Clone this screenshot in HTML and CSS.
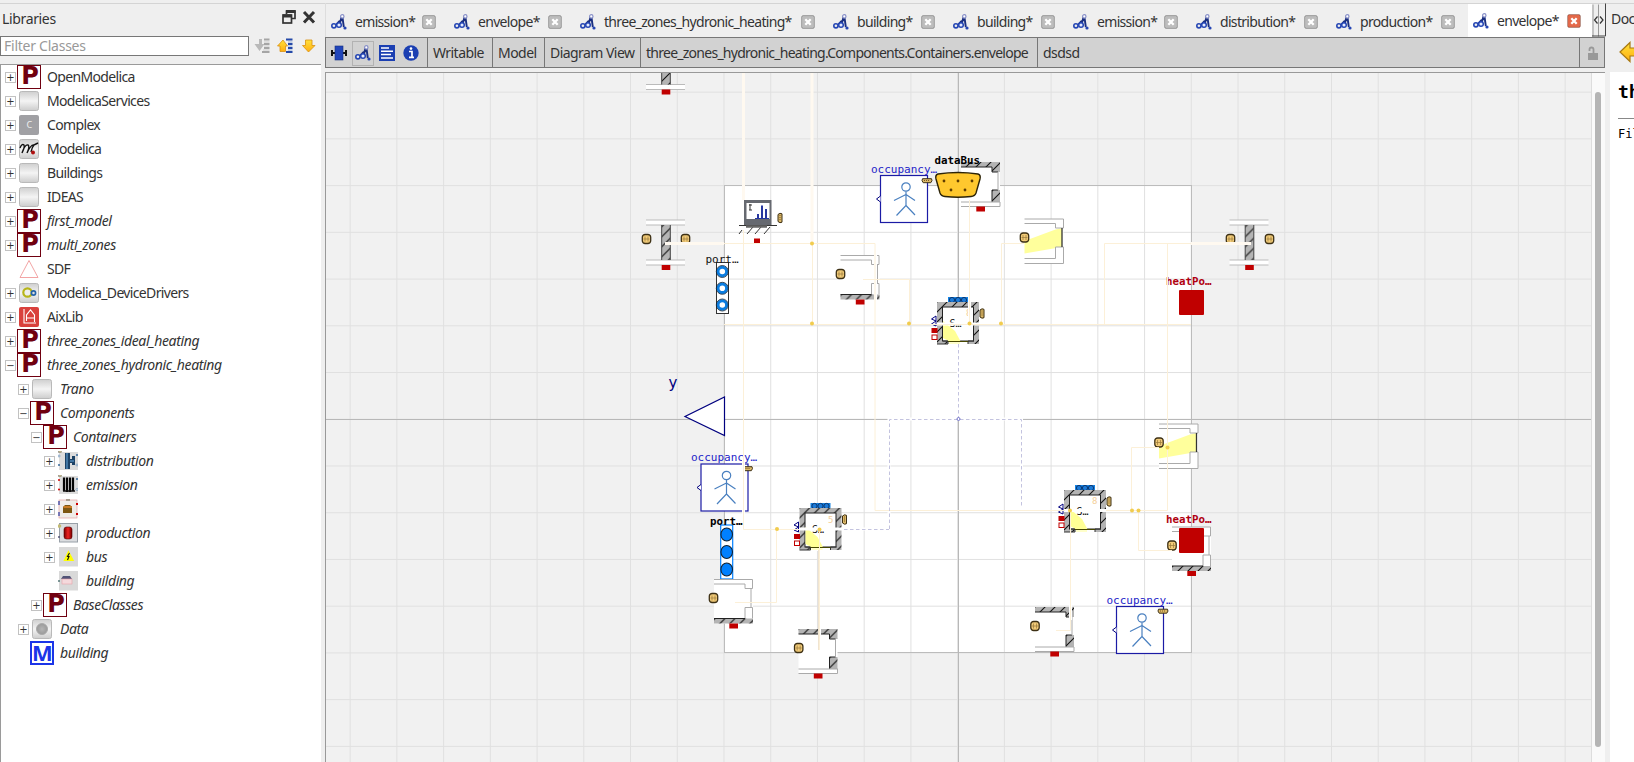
FILE: index.html
```html
<!DOCTYPE html>
<html lang="en">
<head>
<meta charset="utf-8">
<title>envelope - Diagram View</title>
<link rel="stylesheet" href="styles.css">
</head>
<body>
<svg class="sprite" width="0" height="0" aria-hidden="true">
  <defs>
    <linearGradient id="gGrey" x1="0" y1="0" x2="0" y2="1"><stop offset="0" stop-color="#cfcfcf"/><stop offset=".5" stop-color="#f4f4f4"/><stop offset="1" stop-color="#cdcdcd"/></linearGradient>
    <linearGradient id="gGold" x1="0" y1="0" x2="0" y2="1"><stop offset="0" stop-color="#ffe13a"/><stop offset="1" stop-color="#ffae10"/></linearGradient>
    <linearGradient id="gRed" x1="0" y1="0" x2="1" y2="0"><stop offset="0" stop-color="#700"/><stop offset=".5" stop-color="#e22"/><stop offset="1" stop-color="#700"/></linearGradient>
    <radialGradient id="gBall"><stop offset="0" stop-color="#b5b5b5"/><stop offset="1" stop-color="#999"/></radialGradient>
    <pattern id="hatch" width="10" height="10" patternUnits="userSpaceOnUse"><rect width="10" height="10" fill="#b4b4b4"/><path d="M-1 11L11-1M-1 1L1-1M9 11L11 9" stroke="#111" stroke-width="1.1"/></pattern>
    <symbol id="model" viewBox="0 0 16 16"><path d="M10.500 3L8.500 11M11.500 3.500L12.800 13M5 11L8 7.500L11 6" stroke="#1a2f80" stroke-width="1.900" fill="none"/><circle cx="2.900" cy="11.800" r="2.100" fill="#eee" stroke="#2546b4" stroke-width="1.600"/><circle cx="8" cy="11" r="2.300" fill="#e4ebff" stroke="#2546b4" stroke-width="1.500"/><circle cx="11.300" cy="2.400" r="1.700" fill="#fff" stroke="#8890c8" stroke-width="1.200"/><circle cx="14" cy="14" r="1.600" fill="#2546b4"/></symbol>
    <symbol id="close" viewBox="0 0 14 14"><rect x=".6" y=".6" width="12.800" height="12.800" rx="1.500" fill="currentColor" stroke="#000" stroke-opacity=".25"/><path d="M4.300 4.300L9.700 9.700M9.700 4.300L4.300 9.700" stroke="#fff" stroke-width="2.300"/></symbol>
    <symbol id="pkg" viewBox="0 0 20 20"><rect x=".5" y=".5" width="19" height="19" rx="2" fill="url(#gGrey)" stroke="#b9b9b9"/></symbol>
    <symbol id="ports" viewBox="0 0 20 20"><rect x="1" y="1" width="19" height="18" fill="#dcdcdc"/><rect x=".5" y="0" width="3" height="1.600" fill="#d8c98c" stroke="#777" stroke-width=".5"/></symbol>
  </defs>
</svg>

<div class="window">
  <aside class="libraries">
    <header class="dock-title">
      <span>Libraries</span>
      <svg width="34" height="14" viewBox="0 0 34 14"><path d="M4.500 4V1H13V8.500H9.500" fill="none" stroke="#333" stroke-width="1.700"/><path d="M4 1.500H13.500" stroke="#333" stroke-width="3"/><rect x="1" y="5" width="8.500" height="8" fill="#efefef" stroke="#333" stroke-width="1.700"/><path d="M1 6H9.500" stroke="#333" stroke-width="3"/><path d="M22 2L32 12.500M32 2L22 12.500" stroke="#333" stroke-width="3"/></svg>
    </header>
    <div class="filter-row">
      <div class="filter">Filter Classes</div>
      <svg width="64" height="16" viewBox="0 0 64 16"><path d="M5 1V6H0.500L5.500 13L10.500 6H8V1Z" fill="#b9b9b9"/><path d="M10 1.500H15.500M10 6H15.500M10 10H15.500M8 14H15.500" stroke="#a5a5a5" stroke-width="2"/><path d="M10 4H15.500M10 8H15.500M9 12H15.500" stroke="#ccc"/><path d="M29 2L33.500 8H31.500V13.500H26V8H23.500Z" fill="url(#gGold)" stroke="#d89010" stroke-width=".8"/><path d="M32 1.500H38.500M34 6H38.500M34 10H38.500M32 14H38.500" stroke="#2449a8" stroke-width="2"/><path d="M34 4H38.500M34 8H38.500M34 12H38.500" stroke="#9ab0d8"/><path d="M51.500 2H58V7.500H61L54.500 14L48.500 7.500H51.500Z" fill="url(#gGold)" stroke="#d89010" stroke-width=".8"/></svg>
    </div>
    <ul class="tree">
      <li><i class="ex">+</i><b class="letter">P</b><span>OpenModelica</span></li>
      <li><i class="ex">+</i><svg class="ico"><use href="#pkg"/></svg><span>ModelicaServices</span></li>
      <li><i class="ex">+</i><b class="complex">C</b><span>Complex</span></li>
      <li><i class="ex">+</i><svg class="ico" viewBox="0 0 20 20"><use href="#pkg"/><path d="M1 9Q3 4 5 6Q6 8 3 14Q6 5 9 6Q11 7 8 14Q12 5 15 6Q17 5 19 4M15 6Q13 8 12 13" fill="none" stroke="#111" stroke-width="1.400"/><circle cx="14" cy="13.500" r="2" fill="#b01010"/></svg><span>Modelica</span></li>
      <li><i class="ex">+</i><svg class="ico"><use href="#pkg"/></svg><span>Buildings</span></li>
      <li><i class="ex">+</i><svg class="ico"><use href="#pkg"/></svg><span>IDEAS</span></li>
      <li class="user"><i class="ex">+</i><b class="letter">P</b><span>first_model</span></li>
      <li class="user"><i class="ex">+</i><b class="letter">P</b><span>multi_zones</span></li>
      <li><i class="ex none"></i><svg class="ico" viewBox="0 0 20 20"><path d="M10 1.500L19 18.500H1Z" fill="none" stroke="#f09a9a" stroke-width=".9"/></svg><span>SDF</span></li>
      <li><i class="ex">+</i><svg class="ico" viewBox="0 0 20 20"><use href="#pkg"/><circle cx="8.500" cy="9.500" r="4.200" fill="#eee" stroke="#b7b51a" stroke-width="2.200"/><circle cx="14.500" cy="10" r="2.100" fill="#ddd" stroke="#2462a8" stroke-width="1.700"/></svg><span>Modelica_DeviceDrivers</span></li>
      <li><i class="ex">+</i><svg class="ico" viewBox="0 0 20 20"><rect width="20" height="20" rx="2" fill="#d9403c"/><path d="M5 2V16H17M7.500 14V8L11.500 3L15.500 8V15M8 11H15" fill="none" stroke="#fff" stroke-width="1.100"/></svg><span>AixLib</span></li>
      <li class="user"><i class="ex">+</i><b class="letter">P</b><span>three_zones_ideal_heating</span></li>
      <li class="user"><i class="ex">−</i><b class="letter">P</b><span>three_zones_hydronic_heating</span></li>
      <li class="user l1"><i class="ex">+</i><svg class="ico"><use href="#pkg"/></svg><span>Trano</span></li>
      <li class="user l1"><i class="ex">−</i><b class="letter">P</b><span>Components</span></li>
      <li class="user l2"><i class="ex">−</i><b class="letter">P</b><span>Containers</span></li>
      <li class="user l3"><i class="ex">+</i><svg class="ico" viewBox="0 0 20 20"><use href="#ports"/><path d="M7 2H12V8H14V5H17V14H14V12H12V18H7Z" fill="#1c4266"/><path d="M9 2V18M12 10H16" stroke="#4d86b5" stroke-width="1.500"/><circle cx="1" cy="5" r="1" fill="#fff" stroke="#369" stroke-width=".5"/><circle cx="1" cy="14" r="1" fill="#369"/><circle cx="19" cy="4" r="1" fill="#369"/><circle cx="19" cy="14" r="1" fill="#fff" stroke="#369" stroke-width=".5"/></svg><span>distribution</span></li>
      <li class="user l3"><i class="ex">+</i><svg class="ico" viewBox="0 0 20 20"><use href="#ports"/><path d="M6 2.500V16M9 2.500V17M12 2.500V17M15 2.500V16" stroke="#050505" stroke-width="2.200"/><path d="M5 16H17" stroke="#111" stroke-width="1.500"/><circle cx="1" cy="5" r="1" fill="#c00"/><circle cx="1" cy="14.500" r="1" fill="#c00"/><circle cx="19" cy="4" r="1" fill="#369"/><circle cx="19" cy="14.500" r="1" fill="#fff" stroke="#369" stroke-width=".5"/></svg><span>emission</span></li>
      <li class="user l3"><i class="ex">+</i><svg class="ico" viewBox="0 0 20 20"><rect x="1" y="1" width="18" height="18" fill="#efece8" stroke="#e2a3a3" stroke-width=".7"/><path d="M5 8L7 6H12L14 8V14H5Z" fill="#7c5712"/><path d="M5.500 8H14" stroke="#c87a21" stroke-width="2"/><path d="M1 2V6M1 13V17" stroke="#2536a0" stroke-width="1.200"/><rect x="8" y="0" width="4" height="2" fill="#a79d8d"/><rect x="18" y="4" width="2" height="2" fill="#c00"/><rect x="18" y="14" width="2" height="2" fill="#c00"/></svg><span></span></li>
      <li class="user l3"><i class="ex">+</i><svg class="ico" viewBox="0 0 20 20"><rect x="1.500" y=".5" width="18" height="18.500" fill="#dbdde0" stroke="#98a0a8"/><rect x="6" y="4" width="8" height="12" rx="2.500" fill="url(#gRed)" stroke="#500" stroke-width=".6"/><circle cx="1.500" cy="3" r="1.800" fill="#c4bb73"/><circle cx="1" cy="14" r="1" fill="#557"/></svg><span>production</span></li>
      <li class="user l3"><i class="ex">+</i><svg class="ico" viewBox="0 0 20 20"><rect x="1" width="19" height="19.500" fill="#d9d9d9"/><path d="M10.500 5.500L14.500 13H7Z" fill="#ff0" stroke="#ff0" stroke-width="2"/><path d="M11.500 6L9.500 9.500H11L9.500 13" fill="none" stroke="#111" stroke-width="1.100"/></svg><span>bus</span></li>
      <li class="user l3"><i class="ex none"></i><svg class="ico" viewBox="0 0 20 20"><rect x="1" width="19" height="19.500" fill="#d9d9d9"/><path d="M5 5H12L14 8H3Z" fill="#525477"/><rect x="4" y="8" width="10" height="5" fill="#f4d9dc" stroke="#e8a0a8" stroke-width=".6"/><circle cx="1" cy="10" r="1" fill="#577"/></svg><span>building</span></li>
      <li class="user l2"><i class="ex">+</i><b class="letter">P</b><span>BaseClasses</span></li>
      <li class="user l1"><i class="ex">+</i><svg class="ico" viewBox="0 0 20 20"><use href="#pkg"/><circle cx="10" cy="10" r="5.500" fill="url(#gBall)" stroke="#aaa"/></svg><span>Data</span></li>
      <li class="user l1"><i class="ex none"></i><b class="letter m">M</b><span>building</span></li>
    </ul>
  </aside>

  <main class="editor">
    <nav class="tabs">
      <div class="tab"><svg class="ti"><use href="#model"/></svg><span>emission*</span><svg class="tc"><use href="#close"/></svg></div>
      <div class="tab"><svg class="ti"><use href="#model"/></svg><span>envelope*</span><svg class="tc"><use href="#close"/></svg></div>
      <div class="tab"><svg class="ti"><use href="#model"/></svg><span>three_zones_hydronic_heating*</span><svg class="tc"><use href="#close"/></svg></div>
      <div class="tab"><svg class="ti"><use href="#model"/></svg><span>building*</span><svg class="tc"><use href="#close"/></svg></div>
      <div class="tab"><svg class="ti"><use href="#model"/></svg><span>building*</span><svg class="tc"><use href="#close"/></svg></div>
      <div class="tab"><svg class="ti"><use href="#model"/></svg><span>emission*</span><svg class="tc"><use href="#close"/></svg></div>
      <div class="tab"><svg class="ti"><use href="#model"/></svg><span>distribution*</span><svg class="tc"><use href="#close"/></svg></div>
      <div class="tab"><svg class="ti"><use href="#model"/></svg><span>production*</span><svg class="tc"><use href="#close"/></svg></div>
      <div class="tab active"><svg class="ti"><use href="#model"/></svg><span>envelope*</span><svg class="tc"><use href="#close"/></svg></div>
      <svg class="scroller" viewBox="0 0 14 33"><path d="M1 33V1M6.500 33V1" stroke="#999"/><path d="M0 32.500H13.500V0" fill="none" stroke="#444"/><path d="M5.500 13L2.500 16.500L5.500 20M8 13L11 16.500L8 20" fill="none" stroke="#333" stroke-width="1.200"/></svg>
    </nav>
    <div class="toolbar">
      <div class="cell views">
        <svg width="16" height="16" viewBox="0 0 16 16"><path d="M0 8H16M1 5V11M15 5V11" stroke="#111" stroke-width="2"/><rect x="4" y="1" width="8" height="14" fill="#2145ba" stroke="#15317f" stroke-width=".6"/></svg>
        <i class="pressed"><svg width="16" height="16"><use href="#model"/></svg></i>
        <svg width="16" height="16" viewBox="0 0 16 16"><rect width="16" height="16" fill="#1b3fb2"/><path d="M2 3H10M2 6.300H14M2 9.600H12M2 13H14" stroke="#fff" stroke-width="1.500"/></svg>
        <svg width="16" height="16" viewBox="0 0 16 16"><circle cx="8" cy="8" r="7.700" fill="#1b3fb2"/><path d="M6 6.500H9V12M6 12.300H11" stroke="#fff" stroke-width="1.700" fill="none"/><circle cx="8" cy="3.600" r="1.300" fill="#fff"/></svg>
      </div>
      <div class="cell">Writable</div><div class="cell">Model</div><div class="cell">Diagram View</div><div class="cell path">three_zones_hydronic_heating.Components.Containers.envelope</div><div class="cell">dsdsd</div>
      <div class="cell lock"><svg width="12" height="15" viewBox="0 0 12 15"><rect x="1" y="7" width="10" height="7" fill="#999"/><path d="M2.500 5V3.500Q2.500 1.500 4.500 1.500T6.500 3.500V7" fill="none" stroke="#999" stroke-width="1.800"/></svg></div>
    </div>
    <div class="view">
      <svg class="canvas" viewBox="326 73 1265 689">
        <defs>
          <g id="bus"><rect x="-4.200" y="-4.500" width="8.400" height="9" rx="2.800" fill="#f2cb78" stroke="#3d3015" stroke-width="1.300"/><path d="M-1.500-2.500V2.500M1.500-2.500V2.500M-3 0H3" stroke="#9a7a3c" stroke-width=".7"/></g>
          <g id="busV"><path d="M-2-3.500Q0-5.500 2-4.200V4.200Q0 5.500-2 3.500Z" fill="#dcb868" stroke="#3d3015"/><path d="M0-3V3" stroke="#765922" stroke-dasharray="1 1"/></g>
          <g id="busH"><path d="M-3.800 2.200Q-5.800 0-4.500-1.800H4.500Q5.800 0 3.800 2.200Z" fill="#dcb868" stroke="#3d3015"/><path d="M-3 0H3" stroke="#765922" stroke-dasharray="1 1"/></g>
          <g id="wall"><rect x="-20" y="-22.500" width="39" height="5" fill="#fff"/><path d="M-20-22.500H19M-20-17.500H19" stroke="#bbb"/><rect x="-20" y="17.500" width="39" height="5" fill="#fff"/><path d="M-20 17.500H19M-20 22.500H19" stroke="#bbb"/><rect x="-4.300" y="-17.500" width="8.600" height="35" fill="url(#hatch)"/><path d="M-4.300-17.500V17.500M4.300-17.500V17.500" stroke="#444"/><rect x="-4.300" y="22.500" width="8.600" height="5" fill="#c00000"/></g>
          <g id="extWall"><rect width="39" height="44" fill="#fff"/><path d="M0 0H39V10H31V5H0Z" fill="url(#hatch)"/><path d="M0 5H31V10H37" stroke="#222" fill="none"/><rect x="31" y="28" width="8" height="12" fill="url(#hatch)"/><path d="M31 40V28H37" stroke="#222" fill="none"/><path d="M37 10V28M0 40H39V44.500H0" fill="none" stroke="#aaa"/><rect x="15.300" y="44.500" width="8.700" height="5" fill="#c00000"/></g>
          <g id="intWall"><rect width="39" height="44" fill="#fff"/><path d="M0 0H38.500V9H31V4.500H0M37 9V28M31 39V28H38.500V39" stroke="#aaa" fill="none"/><rect y="39" width="39" height="5" fill="url(#hatch)"/><path d="M0 39H31" stroke="#222"/><rect x="15.300" y="44" width="8.700" height="5" fill="#c00000"/></g>
          <g id="window"><rect width="39" height="44" fill="#fff"/><path d="M0 22L31 10.500L37.500 9V28L0 34.500Z" fill="#ffff9c"/><path d="M0 0H39V9H31V4.500H0M0 44.500H39V28H31V39.500H0" stroke="#aaa" fill="#fff"/><path d="M37.500 9V28" stroke="#333" stroke-width="1.300"/></g>
          <g id="zone"><rect x="11" y="-5" width="20" height="6" fill="#1683e2"/><g fill="#1b7ad8" stroke="#0c3770"><circle cx="15" cy="-2" r="2.600"/><circle cx="21" cy="-2" r="2.600"/><circle cx="27" cy="-2" r="2.600"/></g><path d="M0 0H42V42H0Z" fill="url(#hatch)"/><rect x="5.500" y="5" width="31" height="34" fill="#fff" stroke="#222"/><path d="M6 19L18 29L25 42H17L6 36Z" fill="#ffff95"/><path d="M11 43V39.500H31V43Z" fill="#fff"/><path d="M0 42H11V39H6M31 42V39H37" stroke="#333" fill="none"/><path d="M11 39.500H31" stroke="#474700"/><path d="M12 41H23" stroke="#ffff95"/><path d="M-1 14L-5.500 17L-1 19ZM-1 19L-5.500 22L-1 24Z" fill="#fff" stroke="#00007f"/><rect x="-5.500" y="26" width="6" height="5" fill="#c00000"/><rect x="-5" y="33" width="5" height="4.500" fill="#fff" stroke="#c00000"/><use href="#busV" x="45" y="11.500"/></g>
          <g id="occ"><rect width="47" height="47" fill="#fff" stroke="#1b1ba5" stroke-width="1.200"/><path d="M0 20.500L-4 23.500L0 26.500" fill="#fff" stroke="#00007f"/><g fill="none" stroke="#4a80c0" stroke-width="1.200"><circle cx="25.500" cy="11.500" r="4.200"/><path d="M25.500 16V30L16 40M25.500 30L34.500 39.500M25.500 19L13.500 25M25.500 19L34.500 25"/></g></g>
          <pattern id="grid" x="349.650" y="91.650" width="46.730" height="46.730" patternUnits="userSpaceOnUse"><path d="M.5 0V46.730M0 .5H46.730" stroke="#e0e0e0"/></pattern>
        </defs>
        <rect x="326" y="73" width="1265" height="689" fill="#f1f1f1"/>
        <rect x="724.500" y="185.500" width="467" height="467" fill="#fff"/>
        <rect x="326" y="73" width="1265" height="689" fill="url(#grid)"/>
        <rect x="724.500" y="185.500" width="467" height="467" fill="none" stroke="#bcbcbc"/>
        <path d="M326 419.500H1591M958.500 73V762" stroke="#b8b8b8"/>

        <use href="#wall" x="666" y="67"/><use href="#wall" x="666" y="242.500"/><use href="#wall" x="1249.500" y="242.500"/>
        <use href="#bus" x="646.500" y="239"/><use href="#bus" x="685.500" y="239"/><use href="#bus" x="1230.500" y="239"/><use href="#bus" x="1269.500" y="239"/>

        <rect x="744" y="200" width="27.500" height="25" fill="#666970"/><rect x="746.500" y="203" width="23" height="16" fill="#fff"/><path d="M758 218V214M762 218V205.500M766 218V209" stroke="#2637a0" stroke-width="2"/><path d="M755 218.500H769" stroke="#2637a0"/><path d="M750 204V210M749 205H752M749 210H752" stroke="#333"/><path d="M739 225.500H777M742 230L739 234M753 227L747 234M761 227L755 234M770 227L764 234" stroke="#333" fill="none"/><path d="M746 226.500H767" stroke="#666" stroke-width="2.500"/>
        <use href="#busV" x="780" y="218"/><rect x="754" y="238.500" width="6" height="5.500" fill="#c00000"/>

        <rect x="716.500" y="262.500" width="12" height="51" fill="#fff" stroke="#333"/>
        <g fill="#fff" stroke="#0b7de0" stroke-width="3"><circle cx="722.300" cy="271.500" r="4.300"/><circle cx="722.300" cy="288.300" r="4.300"/><circle cx="722.300" cy="305" r="4.300"/></g>
        <g fill="none" stroke="#123" stroke-width=".8"><circle cx="722.300" cy="271.500" r="6"/><circle cx="722.300" cy="288.300" r="6"/><circle cx="722.300" cy="305" r="6"/></g>
        <text class="lbl" x="705.500" y="263">port…</text>

        <use href="#intWall" x="840.500" y="255.500"/><use href="#bus" x="840.500" y="274"/>
        <use href="#occ" x="880.500" y="175.500"/><text class="lbl blue" x="871" y="173">occupancy…</text>
        <use href="#extWall" x="961" y="162"/>
        <path d="M938 174Q958 171 978 174Q981 175 980 179L976 193Q975 196 971 196.500Q958 198 945 196.500Q941 196 940 193L936 179Q935 175 938 174Z" fill="#ffc82e" stroke="#2d2408" stroke-width="1.400"/>
        <g fill="#603d00"><circle cx="944" cy="181" r="1.400"/><circle cx="958" cy="181" r="1.400"/><circle cx="972" cy="181" r="1.400"/><circle cx="951" cy="190" r="1.400"/><circle cx="965" cy="190" r="1.400"/></g>
        <text class="lbl bold" x="934.500" y="164">dataBus</text><use href="#busH" x="927" y="180.500"/>
        <use href="#window" x="1024.500" y="219"/><use href="#bus" x="1024.500" y="237.500"/>

        <rect x="1179" y="290" width="25" height="25" rx="1" fill="#c00000"/><text class="lbl bold red" x="1166" y="285">heatPo…</text>
        <use href="#zone" x="937" y="302"/><text class="lbl tiny" x="949.500" y="327">S…</text><text class="num" x="966" y="316">8</text>

        <text class="out" x="668.500" y="388">y</text><path d="M724.500 397V435.500L685 416.500Z" fill="#fff" stroke="#00007f" stroke-width="1.200"/>
        <use href="#occ" x="701" y="464"/><text class="lbl blue" x="691" y="461">occupancy…</text><use href="#busH" x="747.500" y="468.500"/>

        <rect x="720.700" y="525" width="12" height="54" fill="#fff" stroke="#0080ff" stroke-width="1.200"/><g fill="#0080ff" stroke="#123" stroke-width="1.100"><ellipse cx="726.700" cy="534.500" rx="5.800" ry="6.500"/><ellipse cx="726.700" cy="552" rx="5.800" ry="6.500"/><ellipse cx="726.700" cy="569.500" rx="5.800" ry="6.500"/></g>
        <text class="lbl bold" x="710" y="525">port…</text>
        <use href="#intWall" x="714" y="579.500"/><use href="#bus" x="713.500" y="598"/>
        <use href="#zone" x="799.500" y="508"/><text class="lbl tiny" x="812" y="533">S…</text><text class="num" x="828" y="523">5</text>
        <use href="#extWall" x="798.500" y="629"/><use href="#bus" x="798.700" y="648"/>
        <use href="#window" x="1159" y="424"/><use href="#bus" x="1159" y="442.500"/>
        <use href="#zone" x="1064" y="490"/><text class="lbl tiny" x="1076.500" y="515">S…</text><text class="num" x="1092" y="504">8</text>
        <use href="#intWall" x="1172" y="527"/><use href="#bus" x="1172" y="545.500"/><rect x="1179" y="528" width="25" height="25" rx="1" fill="#c00000"/><text class="lbl bold red" x="1166" y="523">heatPo…</text>
        <use href="#extWall" x="1035" y="607"/><use href="#bus" x="1035" y="626"/>
        <use href="#occ" x="1116.500" y="606.500"/><text class="lbl blue" x="1106.500" y="603.500">occupancy…</text><use href="#busH" x="1163" y="611"/>

        <g fill="none" stroke="#fff" stroke-width="3"><path d="M958.500 344V419H1021.500V507M958.500 419H889V529H844M969.500 302V324H937M937 324H979M799 529H842M743.500 459V515M1064 510.500H1106M819.500 627V635M1070.500 605V620M875.500 250V300"/></g>
        <g fill="none" stroke="#fff9f0" stroke-width="3"><path d="M743.500 73V200M812 73V243M665 243.500H724M1191 243.500H1251"/></g>
        <g fill="none" stroke="#fcf0d8"><path d="M724 243.500H875V510.500H1065M812.500 243.500V324M724 324.500H1191M743.500 230V529.500H799M969.500 200V324M863 279.500H909.500V324M1001.500 324V243.500H1024M1104.500 324V243.500H1191M776.500 529V602.500H735M819.500 530V650M1070.500 510V630.500H1056M1106 510.500H1167.500V243.500M1131.500 510V447.500H1159M1138.500 510V550.500H1172"/></g>
        <path d="M818.500 550V650" stroke="#f0e4d0"/>
        <g fill="none" stroke="#c3c3df" stroke-dasharray="3.500 2.500"><path d="M958.500 344V419M889.500 529V419.500H1021.500V507M844 529.500H889"/></g>
        <g fill="#f1cc4e"><circle cx="812" cy="243.500" r="2"/><circle cx="812" cy="323.500" r="2"/><circle cx="909" cy="323.500" r="2"/><circle cx="969.500" cy="323.500" r="2"/><circle cx="1001" cy="323.500" r="2"/><circle cx="777" cy="529" r="2"/><circle cx="819.500" cy="529.500" r="2"/><circle cx="1070" cy="510.500" r="2"/><circle cx="1132" cy="510.500" r="2"/><circle cx="1138.500" cy="510.500" r="2"/><circle cx="1167.500" cy="447.500" r="2"/></g>
        <circle cx="958.500" cy="419" r="1.500" fill="#fff" stroke="#6565c5" stroke-width=".9"/>
      </svg>
      <div class="scrollbar"><div class="thumb"></div></div>
    </div>
  </main>

  <aside class="docs">
    <header class="dock-title"><span>Documentation</span></header>
    <div class="doc-tools"><svg width="22" height="22" viewBox="0 0 22 22"><path d="M1 11L11 1.500V7H21V15H11V20.500Z" fill="url(#gGold)" stroke="#a97912" stroke-width="1.200"/></svg></div>
    <article class="doc-body"><h1>three_zones</h1><hr><p>Filename</p></article>
  </aside>
</div>
</body>
</html>
```
FILE: styles.css
```css
* { box-sizing: border-box; }
body { margin: 0; width: 1634px; height: 762px; overflow: hidden; background: #efefef; color: #333; font: 14px/20px "Noto Sans", "Open Sans", sans-serif; letter-spacing: -.55px; }
.sprite { position: absolute; }
svg { display: block; flex: none; }
.window { display: flex; height: 762px; padding-top: 3px; background: linear-gradient(#efefef 3px, #d4d4d4 3px, #d4d4d4 4px, #efefef 4px); }
.libraries { width: 321px; display: flex; flex-direction: column; }
.dock-title { display: flex; align-items: center; justify-content: space-between; height: 30px; padding: 1px 5px 0 2px; }
.libraries .dock-title { letter-spacing: -.35px; }
.libraries .dock-title svg { margin-bottom: 4px; }
.filter-row { display: flex; align-items: center; gap: 5px; height: 31px; padding-bottom: 8px; }
.filter-row svg { margin-top: 3px; }
.filter { width: 249px; height: 20px; margin-top: 3px; padding-left: 3px; border: 1px solid #777; background: #fff; color: #999; line-height: 17px; letter-spacing: -.25px; }
.tree { flex: 1; margin: 0; padding: 0 0 0 4px; list-style: none; background: #fff; border: 1px solid #9a9a9a; border-width: 1px 0 0 1px; }
.tree li { display: flex; align-items: center; height: 24px; white-space: nowrap; letter-spacing: -.65px; }
.tree li span { margin-left: 6px; }
.tree .user span { font-style: italic; letter-spacing: -.38px; }
.tree .l1 { padding-left: 13px; }
.tree .l2 { padding-left: 26px; }
.tree .l3 { padding-left: 39px; }
.ex { flex: none; width: 11px; height: 11px; margin-right: 1px; border: 1px solid #c2c2c2; color: #333; font: 10px/9px "DejaVu Sans", sans-serif; letter-spacing: 0; display: flex; align-items: center; justify-content: center; }
.ex.none { border-color: transparent; }
.ico { width: 20px; height: 20px; margin: 0 2px; }
.letter { flex: none; width: 24px; height: 24px; border: 1px solid #700010; color: #700010; background: #fff; font: bold 24px/20px "DejaVu Sans", sans-serif; letter-spacing: 0; text-align: center; padding-left: 2px; }
.letter.m { color: #1c35e8; border: 2px solid #1c35e8; font: bold 22px/18px "Noto Sans", sans-serif; padding-left: 0; }
.complex { width: 20px; height: 20px; margin: 0 2px; border-radius: 2px; background: #a0a0a4; color: #eee; font: 9px/19px "Noto Sans", sans-serif; text-align: center; }
.editor { width: 1280px; margin-left: 4px; display: flex; flex-direction: column; }
.tabs { display: grid; grid-template-columns: 123px 126px 253px 120px 120px 123px 140px 137px 124px 14px; height: 34px; border-left: 1px solid #ddd; letter-spacing: -.68px; }
.tab { display: flex; align-items: center; padding: 4px 13px 0 5px; white-space: nowrap; }
.tab span { flex: 1; margin-left: 8px; }
.tab.active { background: #fff; margin-top: 1px; padding-top: 1px; padding-right: 11px; }
.ti { width: 16px; height: 16px; }
.tab .ti { margin-bottom: 1px; }
.tc { width: 14px; height: 14px; color: #bdbdbd; margin-bottom: 1px; }
.active .tc { color: #e4694a; }
.scroller { width: 14px; height: 34px; }
.toolbar { display: grid; grid-template-columns: 102px 65px 52px 96px 397px 542px 24px; height: 31px; background: #d2d2d2; border: 1px solid #777; }
.cell { display: flex; align-items: center; padding: 1px 0 0 5px; border-right: 1px solid #777; white-space: nowrap; }
.cell.path { letter-spacing: -.74px; }
.views { gap: 5px; }
.views > svg:last-child { margin-left: 3px; }
.pressed { display: grid; place-items: center; width: 22px; height: 25px; border: 1px solid #b2b2b2; }
.lock { border: 0; padding-left: 7px; }
.view { display: flex; height: 690px; margin-top: 4px; border-top: 1px solid #999; border-left: 1px solid #999; }
.canvas { width: 1265px; height: 689px; }
.scrollbar { width: 14px; padding: 19px 4px 0; background: #fafafa; border-left: 1px solid #ddd; }
.thumb { width: 6px; height: 655px; border-radius: 3px; background: #b5b5b5; margin-left: -1px; }
.lbl { font: 11px "DejaVu Sans Mono", monospace; letter-spacing: 0; fill: #111; }
.lbl.bold { font-weight: bold; font-size: 10.800px; fill: #000; }
.lbl.blue { fill: #1d1dc8; }
.lbl.red { fill: #b00010; }
.lbl.tiny { font-size: 10px; }
.num { font: 9px "DejaVu Sans Mono", monospace; letter-spacing: 0; fill: #f4cf9a; }
.out { font: 15px "DejaVu Sans", sans-serif; letter-spacing: 0; fill: #00007f; }
.docs { width: 24px; margin-left: 5px; overflow: hidden; white-space: nowrap; }
.docs .dock-title { padding-left: 1px; }
.doc-tools { height: 39px; padding: 8px 0 0 9px; }
.doc-body { height: 690px; padding: 7px 0 0 8px; background: #fff; color: #000; font-family: "DejaVu Sans Mono", monospace; letter-spacing: 0; }
.doc-body h1 { margin: 0; font-size: 18px; line-height: 26px; }
.doc-body hr { margin: 13px 0 5px; border: 0; border-top: 1px solid #888; }
.doc-body p { margin: 0; font-size: 12px; }
```
